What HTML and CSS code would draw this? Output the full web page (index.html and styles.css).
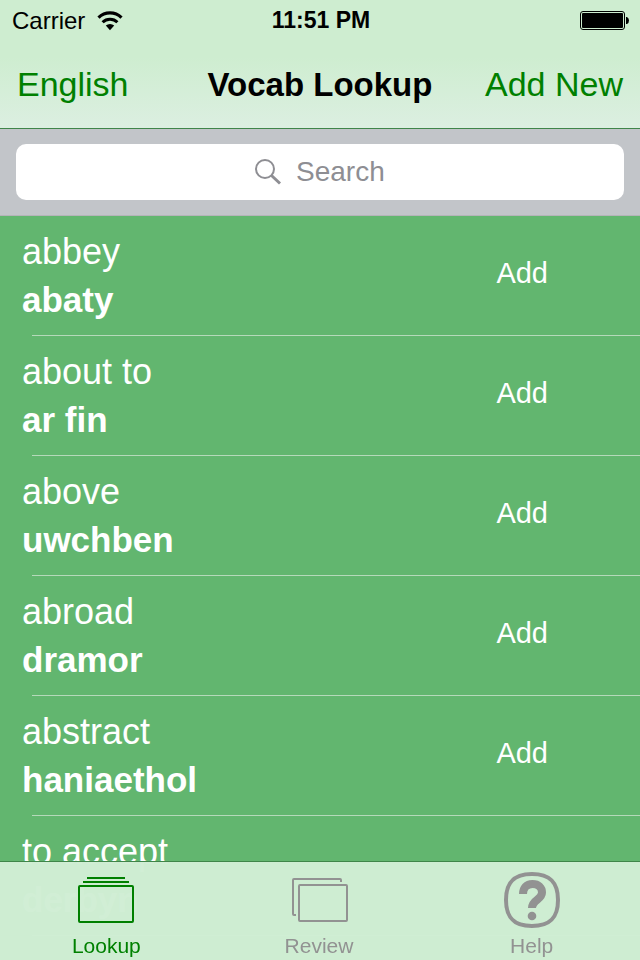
FILE: index.html
```
<!DOCTYPE html>
<html lang="en">
<head>
    <meta charset="UTF-8">
    <meta name="viewport" content="width=device-width, initial-scale=1.0">
    <title>Vocab Lookup</title>
    <link rel="stylesheet" href="styles.css">
</head>
<body>
    <header>
        <div class="status-bar">
            <div class="carrier">
                <span>Carrier</span>
                <svg class="wifi" width="26" height="20" viewBox="0 0 26 20" aria-hidden="true">
                    <path d="M1.5 6.600a16.5 16.5 0 0 1 23 0" fill="none" stroke="#000" stroke-width="3.200"/>
                    <path d="M5.6 11.200a10.5 10.5 0 0 1 14.8 0" fill="none" stroke="#000" stroke-width="3"/>
                    <path d="M8.8 14.600a6.2 6.2 0 0 1 8.4 0L13 19.200z"/>
                </svg>
            </div>
            <span class="time">11:51 PM</span>
            <svg class="battery" width="50" height="20" viewBox="0 0 50 20" aria-hidden="true">
                <rect x="0.5" y="0.5" width="44" height="18" rx="2.5" fill="none" stroke="#000"/>
                <rect x="2" y="2" width="41" height="15" rx="1"/>
                <path d="M46 6h1q2 1 2 3.500t-2 3.500h-1z"/>
            </svg>
        </div>
        <nav class="nav-bar">
            <a href="#english">English</a>
            <h1>Vocab Lookup</h1>
            <a href="#new">Add New</a>
        </nav>
    </header>

    <form class="search-bar">
        <label class="search-box" for="search">
            <svg width="28" height="28" viewBox="0 0 28 28" aria-label="Search words">
                <circle cx="11" cy="11" r="9" fill="none" stroke="#8e8e93" stroke-width="2"/>
                <path d="M17.500 17.500l8.500 8" stroke="#8e8e93" stroke-width="3"/>
            </svg>
            <input type="text" id="search" name="search" placeholder="Search">
        </label>
    </form>

    <main>
        <ul class="word-list">
            <li>
                <div class="word"><span>abbey</span><strong>abaty</strong></div>
                <button type="button">Add</button>
            </li>
            <li>
                <div class="word"><span>about to</span><strong>ar fin</strong></div>
                <button type="button">Add</button>
            </li>
            <li>
                <div class="word"><span>above</span><strong>uwchben</strong></div>
                <button type="button">Add</button>
            </li>
            <li>
                <div class="word"><span>abroad</span><strong>dramor</strong></div>
                <button type="button">Add</button>
            </li>
            <li>
                <div class="word"><span>abstract</span><strong>haniaethol</strong></div>
                <button type="button">Add</button>
            </li>
            <li>
                <div class="word"><span>to accept</span><strong>derbyn</strong></div>
            </li>
        </ul>
    </main>

    <!-- tab bar sits over the end of the list -->
    <nav class="tab-bar">
        <a href="#lookup" class="active">
            <svg width="60" height="60" viewBox="0 0 60 60" fill="none" stroke="currentColor" stroke-width="2" aria-hidden="true">
                <path d="M11 8h38M7 12h46"/>
                <rect x="3" y="16" width="54" height="36" rx="1"/>
            </svg>
            <span>Lookup</span>
        </a>
        <a href="#review">
            <svg width="60" height="60" viewBox="0 0 60 60" fill="none" stroke="currentColor" stroke-width="2" aria-hidden="true">
                <path d="M52 12v-2q0-1-1-1H5q-1 0-1 1v34q0 1 1 1h2"/>
                <rect x="10" y="15" width="48" height="36" rx="1"/>
            </svg>
            <span>Review</span>
        </a>
        <a href="#help">
            <svg width="60" height="60" viewBox="0 0 60 60" fill="none" stroke="currentColor" aria-hidden="true">
                <path stroke-width="4" d="M30 4C48 4 56 12 56 30S48 56 30 56 4 48 4 30 12 4 30 4z"/>
                <path stroke-width="8" d="M21 24C21 18 24.500 14 30.500 14S40 17.500 40 22.500C40 30 30 29.500 30 38"/>
                <circle cx="30" cy="46" r="4.300" fill="currentColor" stroke="none"/>
            </svg>
            <span>Help</span>
        </a>
    </nav>
</body>
</html>
```

FILE: styles.css
```
* {
    box-sizing: border-box;
}

body {
    font-family: "Liberation Sans", Arial, sans-serif;
    background-color: #62b66f;
    margin: 0;
    height: 100vh;
    display: flex;
    flex-direction: column;
    overflow: hidden;
    color: #000;
}

a {
    color: #008000;
    text-decoration: none;
}

/* Header */
header {
    flex-shrink: 0;
    background: linear-gradient(#ceedd0 45%, #dcefe1);
    border-bottom: 1px solid #3f8549;
}

.status-bar {
    display: grid;
    grid-template-columns: 1fr auto 1fr;
    align-items: center;
    height: 41px;
    padding: 0 10px 0 12px;
    font-size: 24px;
}

.carrier {
    display: flex;
    align-items: center;
    gap: 12px;
}

.time {
    font-size: 23px;
    font-weight: bold;
}

.battery {
    justify-self: end;
}

.nav-bar {
    display: grid;
    grid-template-columns: 1fr auto 1fr;
    align-items: baseline;
    height: 87px;
    padding: 24px 17px 0;
    font-size: 34px;
}

.nav-bar h1 {
    margin: 0;
    font-size: 33px;
}

.nav-bar a:last-child {
    text-align: right;
}

/* Search */
.search-bar {
    flex-shrink: 0;
    padding: 15px 16px;
    background-color: #c2c5c9;
    border-bottom: 1px solid #b4b4b8;
}

.search-box {
    display: flex;
    align-items: center;
    justify-content: center;
    gap: 14px;
    height: 56px;
    background-color: #fff;
    border-radius: 10px;
}

.search-box input {
    width: 90px;
    padding: 0;
    border: none;
    outline: none;
    background: none;
    font-family: inherit;
    font-size: 28px;
}

.search-box input::placeholder {
    color: #8e8e93;
}

/* Word list */
main {
    flex: 1;
    min-height: 0;
    overflow: hidden;
}

.word-list {
    list-style: none;
    margin: 0;
    padding: 0;
    color: #fff;
}

.word-list li {
    display: flex;
    align-items: center;
    justify-content: space-between;
    height: 120px;
    padding: 0 92px 0 22px;
    background: linear-gradient(#b5d9ba, #b5d9ba) 32px 100% / 100% 1px no-repeat;
}

.word {
    display: flex;
    flex-direction: column;
    font-size: 36px;
    line-height: 48px;
}

.word strong {
    font-size: 35px;
}

.word-list button {
    padding: 0 0 6px;
    border: none;
    background: none;
    color: #fff;
    font-family: inherit;
    font-size: 29px;
    line-height: 48px;
    cursor: pointer;
}

/* Tab bar */
.tab-bar {
    position: fixed;
    left: 0;
    right: 0;
    bottom: 0;
    display: grid;
    grid-template-columns: repeat(3, 1fr);
    padding: 8px 2px 2px 0;
    background-color: rgba(208, 238, 212, 0.98);
    border-top: 1px solid #3f8549;
}

.tab-bar a {
    display: flex;
    flex-direction: column;
    align-items: center;
    gap: 4px;
    color: #929292;
    font-size: 21px;
    line-height: 24px;
}

.tab-bar .active {
    color: #008000;
}
```
